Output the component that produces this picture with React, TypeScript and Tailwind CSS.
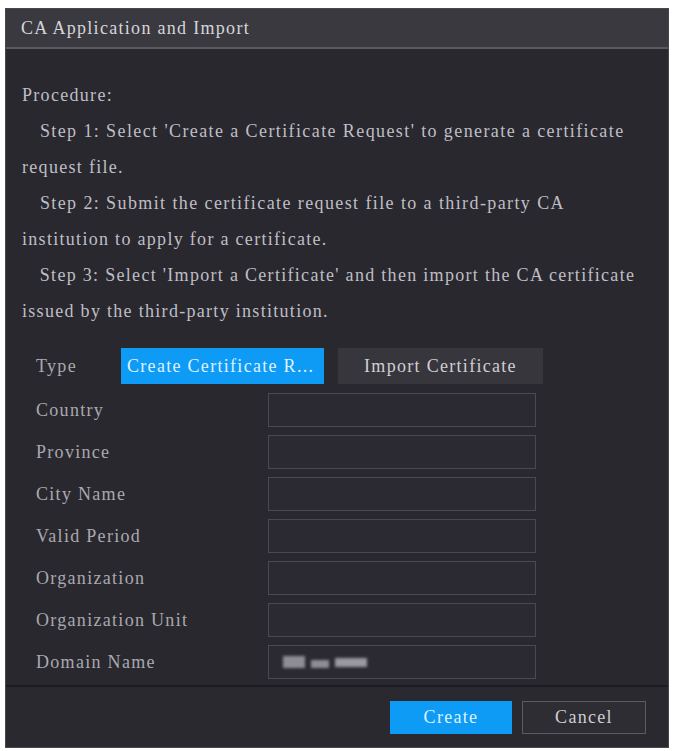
import React from 'react';

const fields = [
  'Country',
  'Province',
  'City Name',
  'Valid Period',
  'Organization',
  'Organization Unit',
  'Domain Name',
];

const FieldRow = ({ label, masked }: { label: string; masked?: boolean }) => (
  <div className="flex items-center h-[34px]">
    <span className="w-[262px] pl-[30px] text-[#a9a8ae]">{label}</span>
    <div className="w-[268px] h-[34px] border border-[#4b4a52] bg-[#2b2a32] flex items-center px-[14px]">
      {masked && (
        <div className="flex items-center gap-[6px] blur-[1.5px] opacity-70">
          <div className="w-[22px] h-[12px] bg-[#b9b8bf]" />
          <div className="w-[18px] h-[8px] bg-[#b9b8bf] mt-[4px]" />
          <div className="w-[32px] h-[9px] bg-[#c9c8cf]" />
        </div>
      )}
    </div>
  </div>
);

export default function App() {
  return (
    <div className="w-[673px] h-[751px] bg-white pt-[8px] pl-[5px] pr-[4px] pb-[3px] font-['Liberation_Serif',serif] text-[18px] tracking-[1.3px]">
      <div className="h-full flex flex-col bg-[#29282f] border border-[#48474e]">
        <div className="h-[40px] shrink-0 bg-[#3a3940] border-b-2 border-[#5a5960] flex items-center px-[15px] text-[#d6d5da]">
          CA Application and Import
        </div>

        <div className="flex-1 flex flex-col pt-[28px] px-[16px] text-[#bfbec4]">
          <div className="leading-[36px] whitespace-nowrap">
            <p>Procedure:</p>
            <p className="pl-[12px] tracking-[1.4px]">&nbsp;Step 1: Select 'Create a Certificate Request' to generate a certificate</p>
            <p>request file.</p>
            <p className="pl-[12px] tracking-[1.4px]">&nbsp;Step 2: Submit the certificate request file to a third-party CA</p>
            <p>institution to apply for a certificate.</p>
            <p className="pl-[12px]">&nbsp;Step 3: Select 'Import a Certificate' and then import the CA certificate</p>
            <p>issued by the third-party institution.</p>
          </div>

          <div className="flex items-center h-[36px] mt-[19px]">
            <span className="w-[99px] pl-[14px] text-[#a9a8ae]">Type</span>
            <div className="w-[203px] h-[36px] bg-[#0e9bf6] text-[#dff1ff] flex items-center px-[6px] whitespace-nowrap overflow-hidden">
              Create Certificate R...
            </div>
            <div className="ml-[14px] w-[205px] h-[36px] bg-[#37363d] text-[#d0cfd4] flex items-center justify-center">
              Import Certificate
            </div>
          </div>

          <div className="flex flex-col gap-[8px] mt-[9px] -ml-[16px]">
            {fields.map((f) => (
              <FieldRow key={f} label={f} masked={f === 'Domain Name'} />
            ))}
          </div>
        </div>

        <div className="h-[62px] shrink-0 border-t-2 border-[#1c1b21] bg-[#2a2930] flex items-center justify-end gap-[10px] pr-[22px]">
          <button className="w-[122px] h-[33px] bg-[#0e9bf6] text-[#dff1ff]">Create</button>
          <button className="w-[124px] h-[33px] bg-[#2e2d34] border border-[#5c5b62] text-[#cfced3]">Cancel</button>
        </div>
      </div>
    </div>
  );
}
